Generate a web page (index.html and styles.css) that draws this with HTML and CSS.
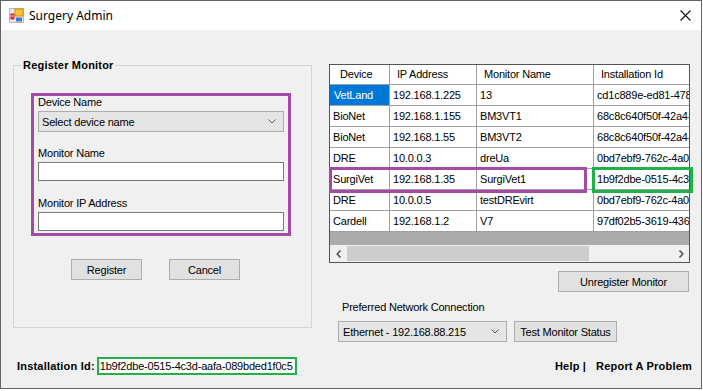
FILE: index.html
```html
<!DOCTYPE html>
<html lang="en">
<head>
  <meta charset="UTF-8">
  <title>Surgery Admin</title>
  <link rel="stylesheet" href="styles.css">
</head>
<body>
  <div class="window">
    <div class="titlebar">
      <svg class="app-icon" width="15" height="15" viewBox="0 0 15 15">
        <rect x="0.5" y="0.5" width="14" height="14" fill="#e8e8e8" stroke="#b8b8b8"/>
        <rect x="6" y="1" width="8" height="7" fill="#f6c531" stroke="#d88a18"/>
        <rect x="1.5" y="5.5" width="4" height="6" fill="#d8262a"/>
        <rect x="2.5" y="7" width="2" height="2" fill="#f2a0a0"/>
        <rect x="7" y="9.5" width="6" height="4" fill="#3e7bd6"/>
      </svg>
      <span class="title">Surgery Admin</span>
      <svg class="close" width="11" height="11" viewBox="0 0 11 11">
        <path d="M0.5 0.5 L10.5 10.5 M10.5 0.5 L0.5 10.5" stroke="#111" stroke-width="1.1" fill="none"/>
      </svg>
    </div>
    <div class="client">
      <div class="left">
        <fieldset class="group">
          <legend>Register Monitor</legend>
          <div class="fields">
            <label class="field-label">Device Name</label>
            <div class="combo combo-device">
              <span>Select device name</span>
              <svg width="8" height="5" viewBox="0 0 8 5"><path d="M0.5 0.5 L4 4 L7.5 0.5" stroke="#555" fill="none"/></svg>
            </div>
            <label class="field-label label-gap">Monitor Name</label>
            <input class="textbox" type="text">
            <label class="field-label label-gap2">Monitor IP Address</label>
            <input class="textbox" type="text">
          </div>
          <div class="actions">
            <button class="btn btn-register">Register</button>
            <button class="btn btn-cancel">Cancel</button>
          </div>
        </fieldset>
        <div class="install-row">
          <span class="install-label">Installation Id:</span>
          <span class="install-id">1b9f2dbe-0515-4c3d-aafa-089bded1f0c5</span>
        </div>
      </div>

      <div class="right">
        <div class="grid-wrap">
          <div class="grid">
            <div class="grid-view">
              <table>
                <colgroup>
                  <col class="c-device"><col class="c-ip"><col class="c-name"><col class="c-id">
                </colgroup>
                <thead>
                  <tr><th class="first">Device</th><th>IP Address</th><th>Monitor Name</th><th>Installation Id</th></tr>
                </thead>
                <tbody>
                  <tr><td class="selected">VetLand</td><td>192.168.1.225</td><td>13</td><td>cd1c889e-ed81-4783-9c1a</td></tr>
                  <tr><td>BioNet</td><td>192.168.1.155</td><td>BM3VT1</td><td>68c8c640f50f-42a4-8d21</td></tr>
                  <tr><td>BioNet</td><td>192.168.1.55</td><td>BM3VT2</td><td>68c8c640f50f-42a4-8d21</td></tr>
                  <tr><td>DRE</td><td>10.0.0.3</td><td>dreUa</td><td>0bd7ebf9-762c-4a04-b1e3</td></tr>
                  <tr><td>SurgiVet</td><td>192.168.1.35</td><td>SurgiVet1</td><td>1b9f2dbe-0515-4c3d-aafa</td></tr>
                  <tr><td>DRE</td><td>10.0.0.5</td><td>testDREvirt</td><td>0bd7ebf9-762c-4a04-b1e3</td></tr>
                  <tr><td>Cardell</td><td>192.168.1.2</td><td>V7</td><td>97df02b5-3619-4367-a0c2</td></tr>
                </tbody>
              </table>
            </div>
            <div class="hscroll">
              <div class="hscroll-btn">
                <svg width="6" height="8" viewBox="0 0 6 8"><path d="M4.5 0.5 L1.2 4 L4.5 7.5" stroke="#555" stroke-width="1.6" fill="none"/></svg>
              </div>
              <div class="hscroll-track"><div class="hscroll-thumb"></div></div>
              <div class="hscroll-btn">
                <svg width="6" height="8" viewBox="0 0 6 8"><path d="M1.5 0.5 L4.8 4 L1.5 7.5" stroke="#555" stroke-width="1.6" fill="none"/></svg>
              </div>
            </div>
          </div>
          <div class="mark mark-row"></div>
          <div class="mark mark-id"></div>
        </div>

        <div class="unregister-row">
          <button class="btn btn-unregister">Unregister Monitor</button>
        </div>
        <div class="net-label">Preferred Network Connection</div>
        <div class="net-row">
          <div class="combo combo-net">
            <span>Ethernet - 192.168.88.215</span>
            <svg width="8" height="5" viewBox="0 0 8 5"><path d="M0.5 0.5 L4 4 L7.5 0.5" stroke="#555" fill="none"/></svg>
          </div>
          <button class="btn btn-test">Test Monitor Status</button>
        </div>
        <div class="links">
          <span class="link">Help |</span>
          <span class="link link-report">Report A Problem</span>
        </div>
      </div>
    </div>
  </div>
</body>
</html>
```

FILE: styles.css
```css
body {
  margin: 0;
  background: #fff;
  font-family: "Liberation Sans", Arial, sans-serif;
  font-size: 11px;
  letter-spacing: -0.2px;
  color: #000;
}
.window {
  width: 702px;
  height: 389px;
  box-sizing: border-box;
  border: 1px solid #646464;
  display: flex;
  flex-direction: column;
}
.titlebar {
  height: 29px;
  flex: none;
  background: #fff;
  display: flex;
  align-items: center;
  padding-left: 8px;
}
.app-icon {
  margin-top: -1px;
}
.title {
  font-family: "Noto Sans", "Open Sans", sans-serif;
  font-size: 12px;
  letter-spacing: 0;
  margin-left: 5px;
  margin-top: -1px;
}
.close {
  margin-left: auto;
  margin-right: 10px;
  margin-top: -1px;
}
.client {
  flex: 1;
  background: #f0f0f0;
  display: flex;
  padding-left: 12px;
}

/* left side */
.left {
  width: 299px;
  padding-top: 29px;
}
.group {
  margin: 0;
  padding: 0 0 47px 0;
  border: 1px solid #d5d5d5;
  min-width: 0;
}
.group legend {
  margin-left: 8px;
  padding: 0 1px;
  font-weight: bold;
  letter-spacing: 0.2px;
  line-height: 13px;
}
.fields {
  margin: 21px 0 0 17px;
  width: 260px;
  box-sizing: border-box;
  border: 3px solid #a24aa4;
  padding: 0 0 2px 4px;
}
.field-label {
  display: block;
  line-height: 13px;
  height: 13px;
}
.label-gap {
  margin-top: 15px;
}
.label-gap2 {
  margin-top: 16px;
}
.combo {
  box-sizing: border-box;
  height: 21px;
  background: #e5e5e5;
  border: 1px solid #acacac;
  display: flex;
  align-items: center;
  justify-content: space-between;
  padding: 0 7px 0 3px;
}
.combo-device {
  width: 246px;
  margin-top: 2px;
}
.textbox {
  display: block;
  box-sizing: border-box;
  width: 246px;
  height: 19px;
  margin: 2px 0 0 0;
  border: 1px solid #7a7a7a;
  background: #fff;
  padding: 0;
  font: inherit;
}
.actions {
  margin-top: 23px;
  display: flex;
}
.btn {
  box-sizing: border-box;
  height: 21px;
  background: #e1e1e1;
  border: 1px solid #adadad;
  font: inherit;
  letter-spacing: inherit;
  color: #000;
  padding: 0;
}
.btn-register {
  width: 71px;
  margin-left: 57px;
}
.btn-cancel {
  width: 71px;
  margin-left: 27px;
}
.install-row {
  margin-top: 29px;
  display: flex;
  align-items: center;
}
.install-label {
  font-weight: bold;
  letter-spacing: 0.2px;
  margin-left: 4px;
}
.install-id {
  margin-left: 2px;
  height: 18px;
  box-sizing: border-box;
  border: 2px solid #22b04a;
  background: #fff;
  line-height: 14px;
  padding: 0 2px 0 1px;
}

/* right side */
.right {
  margin-left: 17px;
  width: 362px;
  padding-top: 34px;
}
.grid-wrap {
  position: relative;
  width: 361px;
}
.grid {
  box-sizing: border-box;
  height: 199px;
  border: 1px solid #555;
  display: flex;
  flex-direction: column;
  overflow: hidden;
}
.grid-view {
  flex: 1;
  background: #ababab;
  overflow: hidden;
}
.grid table {
  border-collapse: separate;
  border-spacing: 0;
  table-layout: fixed;
  width: 420px;
  background: #fff;
}
.c-device { width: 60px; }
.c-ip { width: 87px; }
.c-name { width: 117px; }
.c-id { width: 156px; }
.grid th, .grid td {
  border-right: 1px solid #a0a0a0;
  border-bottom: 1px solid #a0a0a0;
  text-align: left;
  white-space: nowrap;
  overflow: hidden;
  font-weight: normal;
}
.grid th {
  height: 19px;
  line-height: 19px;
  padding: 0 0 0 7px;
}
.grid th.first {
  padding-left: 10px;
}
.grid td {
  height: 20px;
  line-height: 20px;
  padding: 0 0 0 3px;
}
.grid td.selected {
  background: #0078d7;
  color: #fff;
  padding-left: 4px;
}
.hscroll {
  height: 17px;
  flex: none;
  display: flex;
  background: #f0f0f0;
}
.hscroll-btn {
  width: 17px;
  display: flex;
  align-items: center;
  justify-content: center;
}
.hscroll-track {
  flex: 1;
  padding: 1px 0;
}
.hscroll-thumb {
  width: 242px;
  height: 100%;
  background: #cdcdcd;
}
.mark {
  position: absolute;
  box-sizing: border-box;
  top: 103px;
  height: 26px;
}
.mark-row {
  left: 0;
  width: 258px;
  border: 3px solid #a24aa4;
}
.mark-id {
  left: 263px;
  width: 101px;
  border: 3px solid #22b04a;
}
.unregister-row {
  margin-top: 8px;
  display: flex;
  justify-content: flex-end;
  padding-right: 2px;
}
.btn-unregister {
  width: 131px;
}
.net-label {
  margin-top: 9px;
  padding-left: 13px;
  line-height: 13px;
}
.net-row {
  margin-top: 7px;
  display: flex;
}
.combo-net {
  width: 169px;
  margin-left: 9px;
  padding-left: 4px;
}
.btn-test {
  width: 103px;
  margin-left: 7px;
}
.links {
  margin-top: 18px;
  display: flex;
  justify-content: flex-end;
  line-height: 13px;
  margin-right: -1px;
}
.link {
  font-weight: bold;
  letter-spacing: 0.2px;
}
.link-report {
  margin-left: 10px;
}
```
